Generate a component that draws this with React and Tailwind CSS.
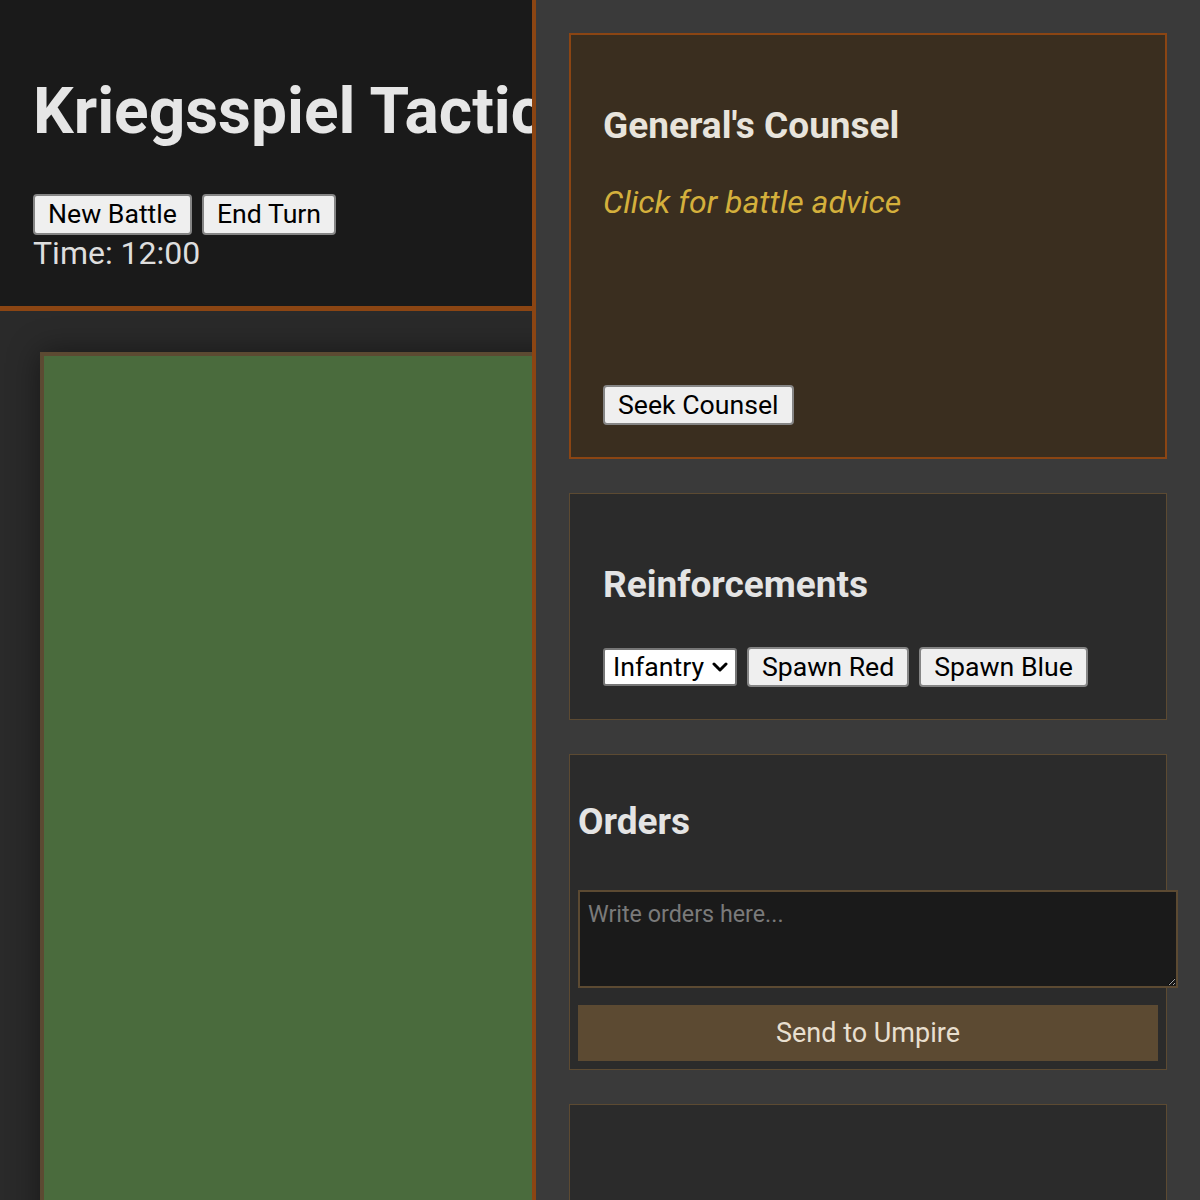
import React, { useState } from 'react';

const btn =
    'h-[40px] px-[13px] bg-[#efefef] text-black text-[26.67px] leading-[31px] border-2 border-[#858585] rounded-[4px]';

const Header = () => (
    <div className="bg-[#1a1a1a] border-b-[5px] border-[#8b4513] pt-[32px] pb-[34px] pl-[33px]">
        <h1 className="mt-[42px] mb-[45px] text-[64px] leading-[75px] font-bold text-[#e6e6e6] whitespace-nowrap">
            Kriegsspiel Tactics
        </h1>
        <div className="flex gap-[10px]">
            <button className={btn + ' h-[41px]'}>New Battle</button>
            <button className={btn + ' h-[41px]'}>End Turn</button>
        </div>
        <div className="text-[32px] leading-[37px] text-[#dedede]">Time: 12:00</div>
    </div>
);

const Board = () => (
    <div className="pt-[41px] pl-[40px]">
        <div className="w-[760px] h-[900px] border-4 border-[#5c4a32] bg-[#4a6b3d] shadow-[0_0_30px_rgba(0,0,0,0.45)]" />
    </div>
);

const Counsel = () => (
    <div className="border-2 border-[#8b4513] bg-[#3a2e1f] p-[32px]">
        <h2 className="mt-[30px] text-[37px] leading-[58px] font-bold text-[#e8e4dc]">General's Counsel</h2>
        <p className="mt-[29px] text-[32px] leading-[37px] italic text-[#d4b03c]">Click for battle advice</p>
        <button className={btn + ' mt-[164px]'}>Seek Counsel</button>
    </div>
);

// unit picker with a heavier chevron than the stock one
const UnitSelect = () => {
    const [unit, setUnit] = useState('infantry');
    return (
        <div className="relative">
            <select
                value={unit}
                onChange={(e) => setUnit(e.target.value)}
                className="appearance-none block h-[38px] w-[134px] bg-white text-black text-[26.67px] leading-[31px] border-2 border-[#767676] rounded-[3px] pl-[8px]"
            >
                <option value="infantry">Infantry</option>
                <option value="cavalry">Cavalry</option>
                <option value="artillery">Artillery</option>
            </select>
            <svg
                className="absolute right-[9px] top-[14px] pointer-events-none"
                width="16"
                height="10"
                viewBox="0 0 16 10"
            >
                <polyline points="2,2 8,8 14,2" fill="none" stroke="#000" strokeWidth="3" strokeLinecap="round" strokeLinejoin="round" />
            </svg>
        </div>
    );
};

const Reinforcements = () => (
    <div className="border border-[#5c4a32] bg-[#2b2b2b] py-[32px] px-[33px]">
        <h2 className="mt-[30px] text-[37px] leading-[58px] font-bold text-[#e4e4e4]">Reinforcements</h2>
        <div className="mt-[33px] flex items-center gap-[10px]">
            <UnitSelect />
            <button className={btn}>Spawn Red</button>
            <button className={btn}>Spawn Blue</button>
        </div>
    </div>
);

const Orders = () => (
    <div className="border border-[#5c4a32] bg-[#2b2b2b] p-[8px]">
        <h2 className="mt-[30px] text-[37px] leading-[58px] font-bold text-[#e4e4e4]">Orders</h2>
        <textarea
            placeholder="Write orders here..."
            className="block mt-[39px] w-[600px] h-[98px] p-[8px] border-2 border-[#5c4a32] bg-[#1a1a1a] text-[#e0e0e0] text-[23.3px] leading-[28px] placeholder:text-[#7a7a7a]"
        />
        <button className="mt-[17px] w-full h-[56px] bg-[#5c4a32] text-[#e8dfcf] text-[27px]">Send to Umpire</button>
    </div>
);

const Log = () => <div className="border border-[#5c4a32] bg-[#2b2b2b] h-[240px]" />;

export default function App() {
    return (
        <div className="flex font-['Roboto',sans-serif] bg-[#3a3a3a]">
            <div className="w-[536px] shrink-0 border-r-4 border-[#8b4513] bg-[#2a2a2a] overflow-hidden">
                <Header />
                <Board />
            </div>
            <div className="flex-1 min-w-0 pt-[33px] px-[33px] pb-[32px] flex flex-col gap-[34px]">
                <Counsel />
                <Reinforcements />
                <Orders />
                <Log />
            </div>
        </div>
    );
}
